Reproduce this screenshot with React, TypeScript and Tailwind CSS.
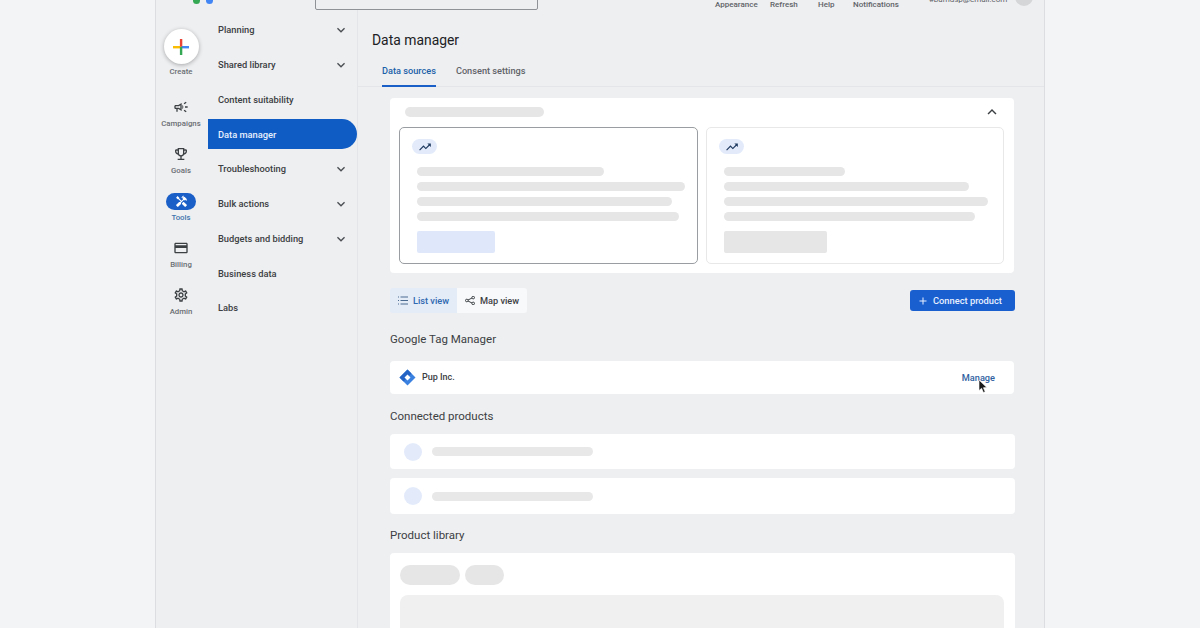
import React from "react";
import {
  MdOutlineCampaign,
  MdOutlineEmojiEvents,
  MdHandyman,
  MdOutlineCreditCard,
  MdOutlineSettings,
  MdExpandMore,
  MdExpandLess,
  MdTrendingUp,
  MdAdd,
} from "react-icons/md";

const navItems: [string, boolean][] = [
  ["Planning", true],
  ["Shared library", true],
  ["Content suitability", false],
  ["Data manager", false],
  ["Troubleshooting", true],
  ["Bulk actions", true],
  ["Budgets and bidding", true],
  ["Business data", false],
  ["Labs", false],
];

function Bar({ w, c = "bg-[#e6e6e6]" }: { w: string; c?: string }) {
  return <div className={`h-[9px] rounded-full ${c} ${w}`} />;
}

function RailItem({ icon, label, mt }: { icon: React.ReactNode; label: string; mt: string }) {
  return (
    <div className={`flex flex-col items-center ${mt}`}>
      <div className="h-[18px] flex items-center justify-center text-[#3c4043]">{icon}</div>
      <div className="text-[7.8px] leading-[10px] mt-[3px] font-medium text-[#6a6e73]">{label}</div>
    </div>
  );
}

function Row({ w }: { w: string }) {
  return (
    <div className={`${w} bg-white rounded-[4px] flex items-center pl-[14px]`}>
      <div className="w-[18px] h-[18px] rounded-full bg-[#e3ebfb]" />
      <div className="ml-[10px] w-[161px] h-[9px] rounded-full bg-[#e8e8e8]" />
    </div>
  );
}

function Pill() {
  return (
    <div className="-ml-[5px] w-[25px] h-[15px] rounded-full bg-[#e3ebfb] flex items-center justify-center text-[#1f3a5f]">
      <MdTrendingUp size={14} />
    </div>
  );
}

export default function App() {
  return (
    <div className="w-[1200px] h-[628px] overflow-hidden bg-[#f3f4f6] flex font-['Roboto',sans-serif]">
      <div className="ml-[155px] w-[890px] h-[628px] shrink-0 bg-[#eeeff1] border-x border-[#dcdde0] flex flex-col overflow-hidden">
        {/* Header, cut by the top edge */}
        <header className="h-[10px] shrink-0 flex items-end overflow-visible relative">
          <div className="ml-[37px] mb-[6px] flex gap-[6px]">
            <div className="w-[7px] h-[7px] rounded-full bg-[#34a853]" />
            <div className="w-[7px] h-[7px] rounded-full bg-[#4285f4]" />
          </div>
          <div className="ml-[102px] w-[223px] h-[20px] border border-[#8f9296] rounded-[2px] shrink-0" />
          <div className="ml-[177px] flex items-end text-[8px] leading-[10px] font-medium text-[#5f6368]">
            <span className="w-[55px]">Appearance</span>
            <span className="w-[48px]">Refresh</span>
            <span className="w-[35px]">Help</span>
            <span>Notifications</span>
          </div>
          <div className="ml-[30px] mb-[5px] text-[8px] leading-[10px] text-[#5f6368]">#bamdsp@email.com</div>
          <div className="ml-[8px] mb-[4px] w-[18px] h-[18px] rounded-full bg-[#d5d6d8]" />
        </header>

        <div className="flex flex-1 min-h-0">
          {/* Rail */}
          <aside className="w-[52px] shrink-0 flex flex-col items-center pt-[19px] pr-[2px]">
            <div className="w-[35px] h-[35px] rounded-full bg-white shadow-[0_1px_4px_rgba(0,0,0,0.3)] flex items-center justify-center">
              <svg width="18" height="18" viewBox="0 0 18 18">
                <rect x="1" y="8" width="8" height="2.4" fill="#fbbc04" />
                <rect x="9" y="8" width="8" height="2.4" fill="#4285f4" />
                <rect x="7.9" y="1" width="2.4" height="7.5" fill="#ea4335" />
                <rect x="7.9" y="9" width="2.4" height="8" fill="#34a853" />
              </svg>
            </div>
            <div className="text-[7.8px] leading-[10px] mt-[3px] font-medium text-[#6a6e73]">Create</div>
            <RailItem mt="mt-[21px]" label="Campaigns" icon={<MdOutlineCampaign size={16} />} />
            <RailItem mt="mt-[16px]" label="Goals" icon={<MdOutlineEmojiEvents size={16} />} />
            <div className="flex flex-col items-center mt-[17px]">
              <div className="w-[30px] h-[17px] rounded-full bg-[#1a5fc8] flex items-center justify-center text-white">
                <MdHandyman size={13} />
              </div>
              <div className="text-[7.8px] leading-[10px] mt-[3px] font-medium text-[#3f74ad]">Tools</div>
            </div>
            <RailItem mt="mt-[16px]" label="Billing" icon={<MdOutlineCreditCard size={16} />} />
            <RailItem mt="mt-[16px]" label="Admin" icon={<MdOutlineSettings size={16} />} />
          </aside>

          {/* Nav */}
          <nav className="w-[149px] shrink-0 pt-[5px] flex flex-col gap-[4.75px] text-[9.3px] font-medium text-[#3c4043]">
            {navItems.map(([label, chev]) => {
              const active = label === "Data manager";
              return (
                <div
                  key={label}
                  className={`h-[30px] shrink-0 flex items-center pl-[10px] pr-[8px] justify-between ${
                    active ? "bg-[#0f5cc4] text-[#e8f0fe] rounded-r-full" : ""
                  }`}
                >
                  <span className="pt-[0.5px]">{label}</span>
                  {chev && <MdExpandMore size={16} className="text-[#4a4e52]" />}
                </div>
              );
            })}
          </nav>

          {/* Main */}
          <main className="flex-1 min-w-0 border-l border-[#e4e5e8] flex flex-col">
            <div className="pl-[14px] pt-[21px] text-[13.9px] leading-[18px] text-[#202124]">Data manager</div>
            <div className="mt-[11px] h-[27px] border-b border-[#e4e5e8] flex pl-[24px] text-[9.2px] font-medium shrink-0">
              <div className="h-[27px] text-[#1a5fa8] border-b-2 border-[#1a5fc8] pt-[5px] leading-[12px]">
                Data sources
              </div>
              <div className="ml-[20px] pt-[5px] leading-[12px] text-[#5f6368]">Consent settings</div>
            </div>

            <div className="pl-[32px] pt-[11px] w-[657px] flex flex-col">
              {/* Top card */}
              <section className="h-[175px] w-[624px] bg-white rounded-[4px] flex flex-col shrink-0 px-[9px] pt-[9px]">
                <div className="h-[20px] flex items-start justify-between shrink-0">
                  <div className="ml-[6px] w-[139px] h-[10px] rounded-full bg-[#e6e6e6]" />
                  <MdExpandLess size={18} className="text-[#3c4043] mr-[4px] -mt-[4px]" />
                </div>
                <div className="flex gap-[8px]">
                  <div className="w-[299px] h-[137px] rounded-[5px] border border-[#9a9da1] px-[17px] pt-[11px]">
                    <Pill />
                    <div className="mt-[13px] flex flex-col gap-[6px]">
                      <Bar w="w-[187px]" />
                      <Bar w="w-[268px]" />
                      <Bar w="w-[255px]" />
                      <Bar w="w-[262px]" />
                    </div>
                    <div className="mt-[10px] w-[78px] h-[22px] rounded-[2px] bg-[#dfe8fb]" />
                  </div>
                  <div className="w-[298px] h-[137px] rounded-[5px] border border-[#e8e8e8] px-[17px] pt-[11px]">
                    <Pill />
                    <div className="mt-[13px] flex flex-col gap-[6px]">
                      <Bar w="w-[121px]" />
                      <Bar w="w-[245px]" />
                      <Bar w="w-[264px]" />
                      <Bar w="w-[251px]" />
                    </div>
                    <div className="mt-[10px] w-[103px] h-[22px] rounded-[2px] bg-[#e6e6e6]" />
                  </div>
                </div>
              </section>

              {/* Toolbar */}
              <div className="mt-[15px] h-[25px] w-[625px] flex items-center justify-between shrink-0">
                <div className="flex h-[25px] rounded-[3px] overflow-hidden text-[9.2px] font-medium">
                  <div className="w-[67px] bg-[#e4ecf8] text-[#2f69b0] flex items-center pl-[8px] gap-[5px]">
                    <svg width="10" height="9" viewBox="0 0 10 9" fill="none" stroke="#4a6a90" strokeWidth="1">
                      <path d="M0 1h1M0 4.5h1M0 8h1M2.5 1h7.5M2.5 4.5h7.5M2.5 8h7.5" />
                    </svg>
                    <span>List view</span>
                  </div>
                  <div className="w-[70px] bg-[#f8f9fb] text-[#3c4043] flex items-center pl-[8px] gap-[5px]">
                    <svg width="10" height="9" viewBox="0 0 10 9" fill="none" stroke="#3c4043" strokeWidth="1">
                      <circle cx="1.8" cy="4.5" r="1.3" />
                      <circle cx="8.2" cy="1.6" r="1.3" />
                      <circle cx="8.2" cy="7.4" r="1.3" />
                      <path d="M3 4l4-2M3 5l4 2" />
                    </svg>
                    <span>Map view</span>
                  </div>
                </div>
                <div className="w-[105px] h-[21px] rounded-[3px] bg-[#1a5fd0] text-[#e8f0fe] text-[9.3px] font-medium flex items-center pl-[7px] gap-[4px]">
                  <MdAdd size={12} />
                  <span>Connect product</span>
                </div>
              </div>

              <h2 className="mt-[19px] text-[11.5px] leading-[14px] font-normal text-[#3c4043]">Google Tag Manager</h2>
              <div className="mt-[15px] h-[33px] w-[624px] bg-white rounded-[4px] flex items-center justify-between pl-[9px] pr-[19px] shrink-0 relative">
                <div className="flex items-center gap-[6px]">
                  <svg width="17" height="17" viewBox="0 0 17 17">
                    <path d="M8.5 0.5 L16.5 8.5 L8.5 16.5 L0.5 8.5 Z" fill="#3b82e0" />
                    <path d="M8.5 0.5 L12.5 4.5 L4.5 12.5 L0.5 8.5 Z" fill="#2463c4" />
                    <path d="M8.5 5.5 L11.5 8.5 L8.5 11.5 L5.5 8.5 Z" fill="#ffffff" />
                  </svg>
                  <span className="text-[9px] font-medium text-[#3c4043] pt-[1px]">Pup Inc.</span>
                </div>
                <span className="text-[9.2px] font-medium text-[#2f5f9f]">Manage</span>
                <svg className="absolute left-[588px] top-[18px]" width="10" height="15" viewBox="0 0 10 15">
                  <path d="M1 1 L1 11.5 L3.6 9.3 L5.4 13.5 L7.2 12.7 L5.4 8.7 L8.8 8.5 Z" fill="#1b1b1b" stroke="#fff" strokeWidth="0.6" />
                </svg>
              </div>

              <h2 className="mt-[15px] text-[11.5px] leading-[14px] font-normal text-[#3c4043]">Connected products</h2>
              <div className="mt-[11px] flex flex-col gap-[9px] shrink-0">
                <div className="h-[35px] flex"><Row w="w-[625px]" /></div>
                <div className="h-[36px] flex"><Row w="w-[625px]" /></div>
              </div>

              <h2 className="mt-[14px] text-[11.5px] leading-[14px] font-normal text-[#3c4043]">Product library</h2>
              <div className="mt-[11px] h-[100px] w-[625px] bg-white rounded-[4px] px-[10px] pt-[12px] shrink-0">
                <div className="flex gap-[5px]">
                  <div className="w-[60px] h-[20px] rounded-full bg-[#e6e6e6]" />
                  <div className="w-[39px] h-[20px] rounded-full bg-[#e6e6e6]" />
                </div>
                <div className="mt-[10px] w-[604px] h-[50px] rounded-[8px] bg-[#f0f0f0]" />
              </div>
            </div>
          </main>
        </div>
      </div>
    </div>
  );
}
